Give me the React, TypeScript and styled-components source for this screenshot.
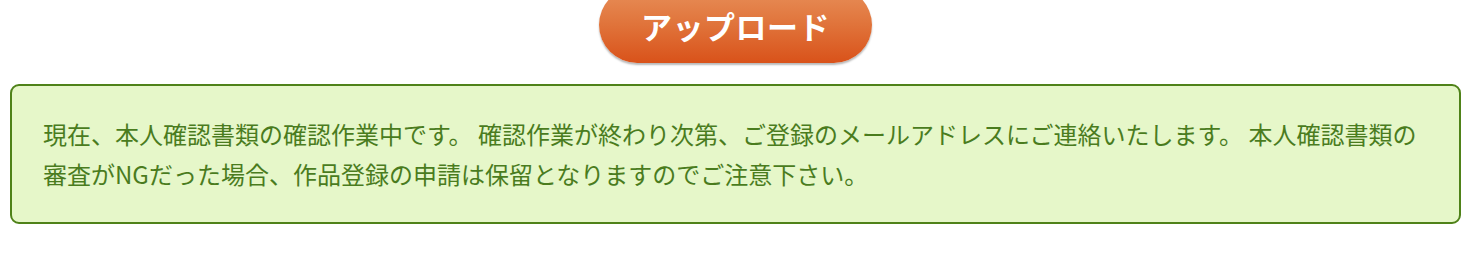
import React from "react";
import styled, { createGlobalStyle } from "styled-components";

const GlobalStyle = createGlobalStyle`
  html, body {
    margin: 0;
    padding: 0;
    background: #ffffff;
    font-family: "Noto Sans CJK JP", "Liberation Sans", sans-serif;
  }
`;

const Page = styled.div`
  width: 1451px;
  margin: 0 19px 0 10px;
  display: flex;
  flex-direction: column;
  align-items: center;
`;

const UploadButton = styled.button`
  width: 273px;
  height: 76px;
  margin-top: -13px;
  border: none;
  border-radius: 38px;
  background: linear-gradient(to bottom, #e8905a 0%, #e0733a 50%, #d9521a 100%);
  box-shadow: 0 2px 2px rgba(0, 0, 0, 0.28);
  color: #ffffff;
  font-family: "Noto Sans CJK JP", sans-serif;
  font-size: 31px;
  font-weight: 700;
  letter-spacing: 0.5px;
  line-height: 1;
  padding: 0;
  cursor: pointer;
  display: flex;
  align-items: center;
  justify-content: center;
`;

const Notice = styled.div`
  box-sizing: border-box;
  width: 100%;
  margin-top: 21px;
  border: 2px solid #4f8219;
  border-radius: 9px;
  background: #e6f7c9;
  padding: 28px 20px 28px 31px;
`;

const NoticeText = styled.p`
  margin: 0;
  color: #4a7c1e;
  font-family: "Noto Sans CJK JP", sans-serif;
  font-size: 24px;
  line-height: 40px;
`;

export default function App() {
  return (
    <>
      <GlobalStyle />
      <Page>
        <UploadButton type="button">アップロード</UploadButton>
        <Notice>
          <NoticeText>
            現在、本人確認書類の確認作業中です。 確認作業が終わり次第、ご登録のメールアドレスにご連絡いたします。 本人確認書類の審査がNGだった場合、作品登録の申請は保留となりますのでご注意下さい。
          </NoticeText>
        </Notice>
      </Page>
    </>
  );
}
